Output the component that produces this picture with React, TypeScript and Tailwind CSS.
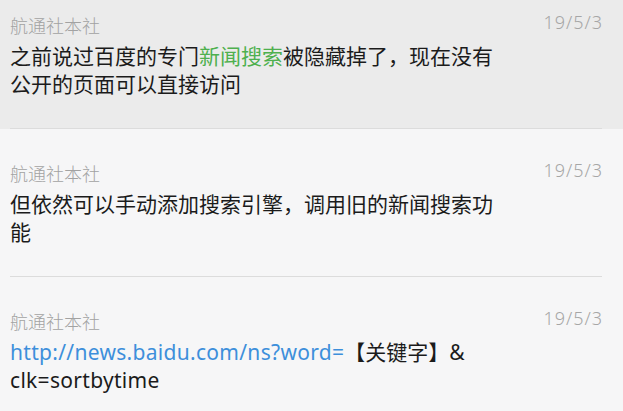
import type { ReactNode } from 'react';

const font = "font-['Noto_Sans','Noto_Sans_CJK_SC',sans-serif]";

function Item({ body, active, last }: { body: ReactNode; active?: boolean; last?: boolean }) {
  return (
    <div className={`${active ? 'bg-[#ebebeb] pt-[14px]' : 'bg-[#f6f6f7] pt-[33px]'} pl-[10px] pr-[21px]`}>
      <div className={`pb-[30px] ${last ? '' : 'border-b border-[#dcdcdc]'}`}>
        <div className="flex items-start justify-between">
          <span className="text-[18px] leading-[24px] font-light text-[#a2a2a2]">航通社本社</span>
          <span className="text-[18px] leading-[16px] font-light tracking-[1px] -mr-[1px] text-[#a6a6a6]">19/5/3</span>
        </div>
        <div className="mt-[4px] text-[21px] leading-[28px] text-[#1b1b1b] whitespace-nowrap">{body}</div>
      </div>
    </div>
  );
}

export default function App() {
  return (
    <div className={`w-[623px] h-[411px] overflow-hidden bg-[#f6f6f7] ${font}`}>
      <Item
        active
        body={
          <>
            之前说过百度的专门<span className="text-[#4eb04e]">新闻搜索</span>被隐藏掉了，现在没有
            <br />
            公开的页面可以直接访问
          </>
        }
      />
      <Item
        body={
          <>
            但依然可以手动添加搜索引擎，调用旧的新闻搜索功
            <br />
            能
          </>
        }
      />
      <Item
        last
        body={
          <>
            <span className="text-[#3d8fdb] tracking-[0.3px]">http://news.baidu.com/ns?word=</span>【关键字】&amp;
            <br />
            <span className="tracking-[0.3px]">clk=sortbytime</span>
          </>
        }
      />
    </div>
  );
}
